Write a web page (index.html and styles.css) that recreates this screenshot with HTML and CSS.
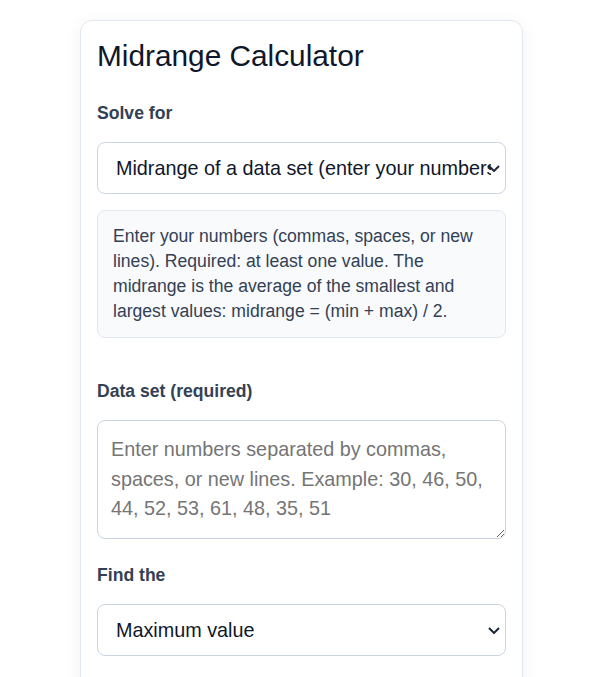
FILE: index.html
```html
<!DOCTYPE html>
<html lang="en">
<head>
    <meta charset="UTF-8">
    <meta name="viewport" content="width=device-width, initial-scale=1.0">
    <title>Midrange Calculator</title>
    <link rel="stylesheet" href="styles.css">
</head>
<body>

    <section class="calc">
        <h1 class="calc-title">Midrange Calculator</h1>

        <div class="field">
            <label class="field-label" for="mode">Solve for</label>
            <div class="select-wrap">
                <select class="field-select" id="mode">
                    <option>Midrange of a data set (enter your numbers)</option>
                    <option>Midrange from min and max</option>
                </select>
                <svg class="select-arrow" width="12" height="7" viewBox="0 0 12 7"><path d="M1 1l5 5 5-5" fill="none" stroke="#1e293b" stroke-width="2"/></svg>
            </div>
        </div>

        <div class="hint">
            Enter your numbers (commas, spaces, or new lines). Required: at least one value. The midrange is the average of the smallest and largest values: midrange = (min + max) / 2.
        </div>

        <div class="field field-data">
            <label class="field-label" for="data">Data set (required)</label>
            <textarea class="field-text" id="data" rows="3" placeholder="Enter numbers separated by commas, spaces, or new lines. Example: 30, 46, 50, 44, 52, 53, 61, 48, 35, 51"></textarea>
        </div>

        <div class="field">
            <label class="field-label" for="find">Find the</label>
            <div class="select-wrap">
                <select class="field-select" id="find">
                    <option>Maximum value</option>
                    <option>Minimum value</option>
                    <option>Midrange</option>
                </select>
                <svg class="select-arrow" width="12" height="7" viewBox="0 0 12 7"><path d="M1 1l5 5 5-5" fill="none" stroke="#1e293b" stroke-width="2"/></svg>
            </div>
        </div>
    </section>

</body>
</html>
```

FILE: styles.css
```css
* {
    margin: 0;
    padding: 0;
    box-sizing: border-box;
}

body {
    background: #fff;
    font-family: "Liberation Sans", Arial, sans-serif;
    color: #0f172a;
}

.calc {
    width: 443px;
    margin: 20px 0 0 80px;
    padding: 17px 16px 40px;
    border: 1px solid #e2e8f0;
    border-radius: 12px;
    background: #fff;
    box-shadow: 0 4px 18px rgba(15, 23, 42, 0.06);
}

.calc-title {
    font-size: 29.8px;
    font-weight: normal;
    line-height: 1.2;
    color: #0f172a;
    margin-bottom: 29px;
}

.field {
    margin-top: 26px;
}

/* 数据集上方留白更大 */
.field-data {
    margin-top: 43px;
}

.field-label {
    display: block;
    font-size: 17.6px;
    font-weight: bold;
    line-height: 1.2;
    color: #334155;
    margin-bottom: 18px;
}

.select-wrap {
    position: relative;
}

.field-select {
    display: block;
    width: 100%;
    height: 52px;
    padding: 0 14px 0 18px;
    font-family: inherit;
    font-size: 19.8px;
    color: #0f172a;
    background: #fff;
    border: 1px solid #cbd5e1;
    border-radius: 8px;
    appearance: none;
    -webkit-appearance: none;
}

/* 下拉箭头盖在文字上 */
.select-arrow {
    position: absolute;
    right: 6px;
    top: 23px;
    pointer-events: none;
}

.field-text {
    display: block;
    width: 100%;
    height: 119px;
    padding: 14px 13px;
    font-family: inherit;
    font-size: 19.8px;
    line-height: 1.5;
    color: #0f172a;
    background: #fff;
    border: 1px solid #cbd5e1;
    border-radius: 8px;
}

.field-text::placeholder {
    color: #757575;
}

.hint {
    margin-top: 16px;
    padding: 13px 15px;
    font-size: 17.6px;
    line-height: 25px;
    color: #334155;
    background: #f8fafc;
    border: 1px solid #e2e8f0;
    border-radius: 8px;
}
```
